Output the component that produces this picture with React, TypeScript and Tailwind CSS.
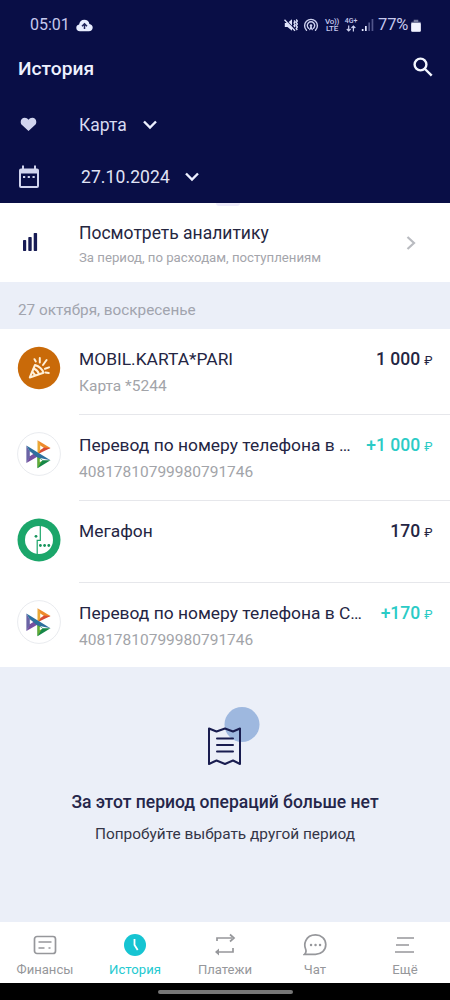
import type { ReactNode } from 'react';

type Operation = {
  title: string;
  subtitle?: string;
  amount: string;
  income?: boolean;
  logo: ReactNode;
  height: string;
};

function PartyLogo() {
  return (
    <svg viewBox="0 0 44 44" className="w-11 h-11" fill="none">
      <circle cx="22" cy="22" r="21.2" fill="#c96a09" />
      <g stroke="#fff0d8" strokeWidth="2" strokeLinecap="round" strokeLinejoin="round">
        <path d="M18 19 12.8 31.5 26.5 26.8Q24.5 21 18 19Z" />
        <path d="M16.8 22.5Q20.5 24 22 28M15.5 26l2.5 3" />
        <path d="M22.8 16.5v-4.5M18.8 15.4l-1.3-2.2M26 19l3.6-5M28 22.8l4-1.4M28.5 26.5l3.3.6" />
      </g>
    </svg>
  );
}

function SbpLogo() {
  return (
    <svg viewBox="0 0 44 44" className="w-11 h-11">
      <circle cx="22" cy="22" r="21.4" fill="#fff" stroke="#e9ebef" strokeWidth="1" />
      <path d="M20.5 8.2 33.5 16.1 25.8 18.8Z" fill="#ee8b2d" />
      <path d="M20.5 8.2V22.2L26.2 18.7 24.8 14.8Z" fill="#eaa936" />
      <path d="M20.5 22.2 33.5 16.1 25.7 15.6Z" fill="#d84b35" />
      <path d="M20.5 24V36.2L33.5 28.2H25.8Z" fill="#168747" />
      <path d="M20.5 24v12.2l4.3-7Z" fill="#65ac35" />
      <path d="M9.4 31 22 23.8 14.5 20.8Z" fill="#7650a0" />
      <path d="M9.4 13.5 14.5 22.2 9.4 31Z" fill="#6a64a5" />
      <path d="M9.4 13.5 33.5 28.2 20.5 25.5 12.5 19Z" fill="#2d709e" />
      <path d="M12.8 19.8v4.4l3.5-2.2ZM23.2 13.6v4.4l3.6-2.2ZM22.8 26.8v3.5l2.9-1.7Z" fill="#fff" />
    </svg>
  );
}

function MegafonLogo() {
  return (
    <svg viewBox="0 0 44 44" className="w-11 h-11">
      <circle cx="22" cy="22" r="21.5" fill="#1ba66a" />
      <circle cx="22" cy="22" r="14" fill="#fff" />
      <path d="M23.3 7.8v14.5h-3.1v14" fill="none" stroke="#1ba66a" strokeWidth="1.2" />
      <circle cx="19" cy="18.3" r="1.4" fill="#16945c" />
      <circle cx="23.4" cy="27.5" r="1.4" fill="#16945c" />
      <circle cx="27.6" cy="27.5" r="1.4" fill="#16945c" />
      <circle cx="31.8" cy="27.5" r="1.4" fill="#16945c" />
    </svg>
  );
}

const operations: Operation[] = [
  { title: 'MOBIL.KARTA*PARI', subtitle: 'Карта *5244', amount: '1 000', logo: <PartyLogo />, height: 'h-[86px]' },
  { title: 'Перевод по номеру телефона в …', subtitle: '40817810799980791746', amount: '+1 000', income: true, logo: <SbpLogo />, height: 'h-[86px]' },
  { title: 'Мегафон', amount: '170', logo: <MegafonLogo />, height: 'h-[82px]' },
  { title: 'Перевод по номеру телефона в С…', subtitle: '40817810799980791746', amount: '+170', income: true, logo: <SbpLogo />, height: 'h-[84px]' },
];

function ChevronDown() {
  return (
    <svg viewBox="0 0 16 12" className="w-4 h-3" fill="none" stroke="#edf0ff" strokeWidth="2.4">
      <path d="m2 2.5 6 6 6-6" />
    </svg>
  );
}

function StatusBar() {
  return (
    <div className="h-[50px] pl-[30px] pr-[29px] flex items-center justify-between text-[#c6c9ed]">
      <div className="flex items-center gap-[6px]">
        <span className="text-[16px] leading-5">05:01</span>
        <svg viewBox="0 0 17 13" className="w-[17px] h-[13px]">
          <path d="M4 12.3C1.6 12.3.3 10.9.3 8.8c0-1.8 1.1-3 2.8-3.3C3.6 2.4 5.5.8 8.3.8c2.7 0 4.6 1.5 5.1 4.1 2 .3 3.3 1.7 3.3 3.7 0 2.3-1.6 3.7-3.8 3.7Z" fill="#e8edff" />
          <path d="M8.5 10V5M6 7.2l2.5-2.5L11 7.2" fill="none" stroke="#20255b" strokeWidth="1.5" />
        </svg>
      </div>
      <div className="flex items-center">
        <svg viewBox="0 0 14 14" className="w-[14px] h-[14px]" fill="none" stroke="#dfe3fb" strokeWidth="1.3">
          <path d="M.8 5h2.7L8 1.2v11.6L3.5 9H.8Z" fill="#dfe3fb" stroke="none" />
          <path d="m1 1 11 12" stroke="#090d46" strokeWidth="1.2" />
          <path d="m.5 1.8 10.5 11" />
          <path d="m10 2.5 1.1 1.3L10 5l1.1 1.4L10 7.8 11.1 9M12.2 1.5 13.3 3l-1.1 1.5 1.1 1.5-1.1 1.5L13.3 9l-1.1 1.5 1.1 1.5" />
        </svg>
        <svg viewBox="0 0 16 14" className="ml-[5px] w-4 h-[14px]" fill="none" stroke="#cdd1ef" strokeWidth="1.4" strokeLinecap="round">
          <path d="M3.5 12.3a6.4 6.4 0 1 1 9 0M5.5 10.2a3.7 3.7 0 1 1 5 0" />
          <circle cx="8" cy="7.6" r="1.3" fill="#cdd1ef" stroke="none" />
          <path d="m6.8 11.5 1.2-2.5 1.2 2.5" />
        </svg>
        <div className="ml-[6px] w-[14px] flex flex-col items-center text-[8px] leading-[7px] font-medium tracking-[-0.3px]">
          <span>Vo))</span>
          <span>LTE</span>
        </div>
        <div className="ml-[5px] w-[14px] flex flex-col items-center text-[7px] leading-[7px] font-medium">
          <span>4G+</span>
          <svg viewBox="0 0 10 7" className="w-[10px] h-[7px]" fill="none" stroke="#cdd1ef" strokeWidth="1.2">
            <path d="M2.7.4v5.5M.8 4l1.9 2L4.6 4M7.4 6.5V1M5.5 3l1.9-2 1.9 2" />
          </svg>
        </div>
        <svg viewBox="0 0 13 14" className="ml-[3px] w-[13px] h-[14px]">
          <path d="M.8 11h1.7v2H.8ZM4 8h1.7v5H4Z" fill="#e4e7ff" />
          <path d="M7.3 4.5H9V13H7.3ZM10.6 1h1.7v12h-1.7Z" fill="#51558a" />
        </svg>
        <span className="ml-[4px] w-[33px] text-[16.5px] leading-5 tracking-[-0.1px] whitespace-nowrap">77%</span>
        <svg viewBox="0 0 10 13" className="w-[10px] h-[13px]">
          <path d="M2.7.7h4.6v2H9q.8 0 .8.9v8q0 1-1 1H1.2q-1 0-1-1v-8q0-.9.8-.9h1.7Z" fill="#777b9f" />
          <rect x=".2" y="4" width="9.6" height="8.7" rx="1" fill="#f2f3ff" />
        </svg>
      </div>
    </div>
  );
}

function Header() {
  return (
    <header className="h-[203px] bg-[#090e46]">
      <StatusBar />
      <div className="h-9 pl-[18px] pr-[17px] flex items-center justify-between">
        <h1 className="pt-[2px] text-[19.2px] font-medium text-[#eef1ff]">История</h1>
        <svg viewBox="0 0 20 20" className="w-5 h-5 mb-[2px]" fill="none" stroke="#f4f7ff" strokeWidth="2.4">
          <circle cx="7.5" cy="7.5" r="5.9" />
          <path d="m12 12 6.7 6.7" />
        </svg>
      </div>
      <div className="mt-3 h-[53px] pl-5 flex items-center">
        <svg viewBox="0 0 18 16" className="w-[17px] h-[15px]">
          <path d="M9 15 2.1 8.6C-.7 5.9.8.8 5 .8c1.7 0 3.1.8 4 2.2C9.9 1.6 11.3.8 13 .8c4.200 0 5.700 5.100 2.900 7.800Z" fill="#d1d4ee" />
        </svg>
        <span className="ml-[42px] mr-[14px] w-[49px] pt-px text-[17.5px] text-[#d8dbf1]">Карта</span>
        <ChevronDown />
      </div>
      <div className="h-[52px] pl-[18px] flex items-center">
        <svg viewBox="0 0 22 24" className="w-[22px] h-6">
          <path fillRule="evenodd" d="M4 .5h2v3h10v-3h2v3h1q2 0 2 2V21q0 2-2 2H3q-2 0-2-2V5.5q0-2 2-2h1ZM3 8.5V21h16V8.5Z" fill="#d1d4ee" />
          <path d="M5 11h2.2v2H5ZM9.7 11h2.2v2H9.7ZM14.5 11h2.2v2h-2.2Z" fill="#d1d4ee" />
        </svg>
        <span className="ml-[41px] mr-[13px] w-[90px] pt-px text-[17.5px] tracking-[0.1px] text-[#e0e3f5] whitespace-nowrap">27.10.2024</span>
        <ChevronDown />
      </div>
    </header>
  );
}

function Analytics() {
  return (
    <section className="relative h-[79px] pl-[22px] pr-[34px] flex items-center bg-white">
      <div className="absolute top-0 left-[216px] w-6 h-[3px] rounded-b-full bg-[#eeecfa]" />
      <svg viewBox="0 0 16 18" className="w-4 h-[18px] mb-px" fill="#171b54">
        <rect x="1" y="7" width="3.2" height="11" rx=".7" />
        <rect x="6.3" y="4" width="3.4" height="14" rx=".7" />
        <rect x="11.7" y="0" width="3.4" height="18" rx=".7" />
      </svg>
      <div className="ml-[41px] pt-[3px] flex-1 whitespace-nowrap">
        <div className="text-[17.5px] leading-6 text-[#25263f]">Посмотреть аналитику</div>
        <div className="mt-[3px] text-[13.2px] leading-5 text-[#a4a5ab]">За период, по расходам, поступлениям</div>
      </div>
      <svg viewBox="0 0 10 14" className="w-[10px] h-[14px]" fill="none" stroke="#b9bbc0" strokeWidth="2.2">
        <path d="m1.5 1 6.5 6-6.5 6" />
      </svg>
    </section>
  );
}

function OperationRow({ op, last }: { op: Operation; last: boolean }) {
  return (
    <div className={`${op.height} pl-[17px] flex items-start`}>
      <div className="w-[62px] pt-[17px] shrink-0">{op.logo}</div>
      <div className={`h-full flex-1 flex items-start justify-between pr-[17.5px] pt-[18px] whitespace-nowrap ${last ? '' : 'border-b border-[#e6e7eb]'}`}>
        <div>
          <div className="text-[17.4px] leading-6 text-[#242543]">{op.title}</div>
          {op.subtitle && <div className="mt-[5px] text-[15.5px] leading-5 text-[#a2a4a9]">{op.subtitle}</div>}
        </div>
        <div className={`flex items-baseline leading-6 ${op.income ? 'text-[#2bcbc6]' : 'text-[#242543]'}`}>
          <span className="text-[17.5px] font-medium">{op.amount}</span>
          <span className="ml-1 text-[12.5px]">₽</span>
        </div>
      </div>
    </div>
  );
}

function EmptyState() {
  return (
    <section className="flex-1 flex flex-col items-center pt-[39px]">
      <svg viewBox="0 0 54 60" className="w-[54px] h-[60px] ml-[18px]">
        <circle cx="35" cy="18.5" r="17.5" fill="#9eb8df" />
        <g fill="none" stroke="#191d50" strokeWidth="2" strokeLinejoin="round" strokeLinecap="round">
          <path d="M2 22.500 9.500 25.500 18 22.500 26 25.500 33 22.500V58L26 54.500 18 58 9.500 54.500 2 58Z" />
          <path d="M10 32.500h16M10 39h16M10 45.500h16" />
        </g>
      </svg>
      <h2 className="mt-[24px] text-[17.55px] leading-6 font-medium text-[#25264a]">За этот период операций больше нет</h2>
      <p className="mt-[8px] text-[15.4px] leading-6 text-[#343547]">Попробуйте выбрать другой период</p>
    </section>
  );
}

const tabs: { label: string; active?: boolean; icon: ReactNode }[] = [
  {
    label: 'Финансы',
    icon: (
      <>
        <rect x="1.5" y="3.5" width="21" height="17" rx="2.5" />
        <path d="M5.5 9h13M5.5 15h6M15.5 15h2" />
      </>
    ),
  },
  {
    label: 'История',
    active: true,
    icon: (
      <>
        <circle cx="12" cy="12" r="11" fill="#16c4d2" stroke="none" />
        <path d="M11.5 6v6l3.2 5" stroke="white" strokeWidth="1.8" />
      </>
    ),
  },
  {
    label: 'Платежи',
    icon: (
      <>
        <path d="M4 8V5h15M20 15v4H5" />
        <path d="m17 1.5 4 3.5-4 3.500" />
        <path d="M6 15.500 2 19l4 3.500Z" fill="currentColor" stroke="none" />
      </>
    ),
  },
  {
    label: 'Чат',
    icon: (
      <>
        <path d="M1.5 21.3C3.3 19.8 3.4 18.2 2.6 16 1.6 13.7 1.5 10.5 2.8 7.7 4.5 3.9 8.2 1.900 12.500 1.900c5.800 0 10.300 4 10.300 9.700s-4.600 9.700-10.300 9.700Z" />
        <path d="M8 12h.1M12.5 12h.1M17 12h.1" strokeWidth="2.4" strokeLinecap="round" />
      </>
    ),
  },
  {
    label: 'Ещё',
    icon: <path d="M4 5h17M3 12h13M2 19h19" />,
  },
];

function TabBar() {
  return (
    <nav className="h-[61px] bg-white flex">
      {tabs.map((tab) => (
        <div
          key={tab.label}
          className={`flex-1 flex flex-col items-center pt-[11px] ${tab.active ? 'text-[#23c9d0]' : 'text-[#96979b]'}`}
        >
          <svg viewBox="0 0 24 24" className="w-6 h-6" fill="none" stroke="currentColor" strokeWidth="1.7">
            {tab.icon}
          </svg>
          <span className="mt-[3px] text-[13.1px] leading-5">{tab.label}</span>
        </div>
      ))}
    </nav>
  );
}

export default function App() {
  return (
    <div className="w-[450px] h-[1000px] flex flex-col overflow-hidden bg-[#ebeff8] font-['Roboto','Liberation_Sans',sans-serif]">
      <Header />
      <Analytics />
      <div className="h-[47px] pl-[18px] pt-[10px] flex items-center text-[15.3px] text-[#a1a4ae]">27 октября, воскресенье</div>
      <main className="bg-white">
        {operations.map((op, i) => (
          <OperationRow key={i} op={op} last={i === operations.length - 1} />
        ))}
      </main>
      <EmptyState />
      <TabBar />
      <div className="h-[17px] bg-black flex justify-center pt-[7px]">
        <div className="w-[135px] h-1 rounded-full bg-[#767676]" />
      </div>
    </div>
  );
}
